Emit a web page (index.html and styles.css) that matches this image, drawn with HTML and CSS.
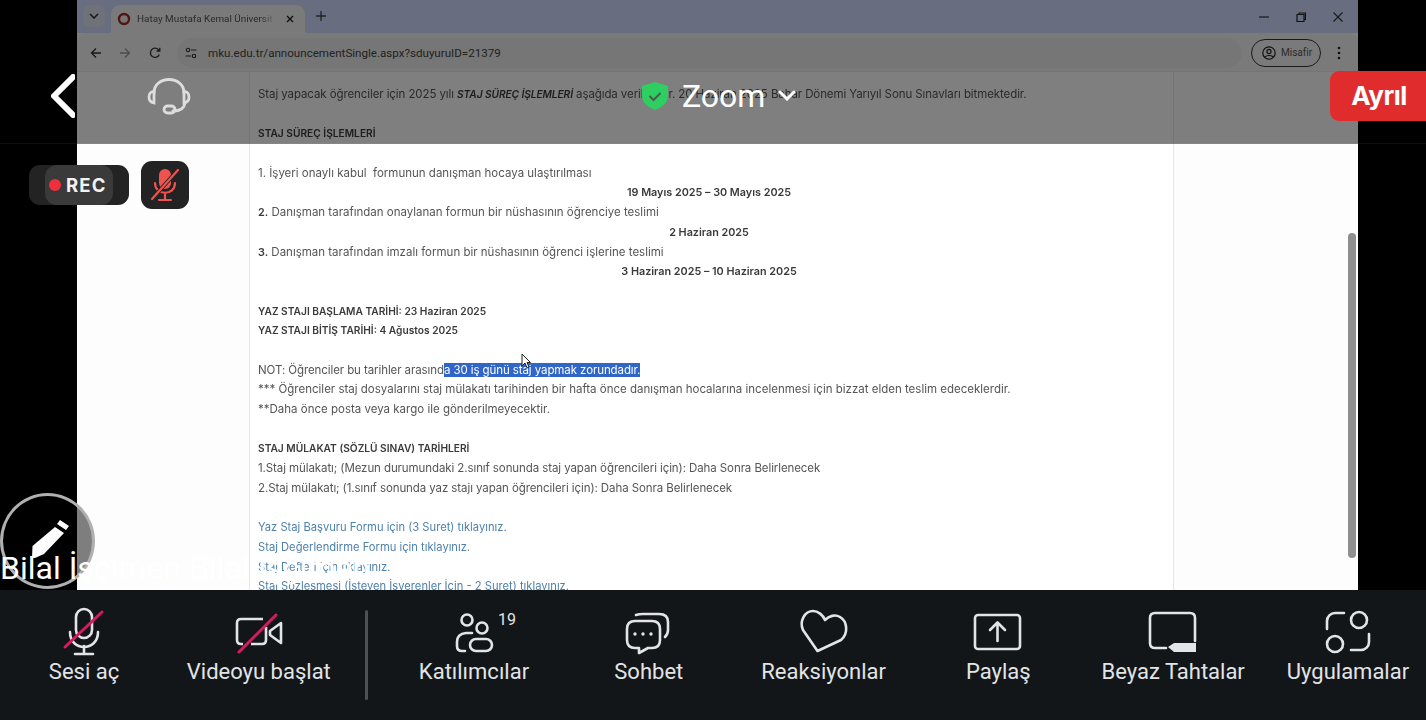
FILE: index.html
```html
<!DOCTYPE html>
<html lang="tr">
<head>
<meta charset="utf-8">
<title>Zoom</title>
<link rel="stylesheet" href="styles.css">
</head>
<body>
<div class="stage">
  <main class="share">
    <div class="screen">
      <div class="tabstrip">
        <span class="tabmenu"><svg width="10" height="6" viewBox="0 0 10 6"><path d="M1 1l4 4 4-4" fill="none" stroke="#333" stroke-width="1.6"/></svg></span>
        <div class="tab">
          <svg class="favicon" width="14" height="14" viewBox="0 0 14 14"><circle cx="7" cy="7" r="5" fill="#f3e9e4" stroke="#9c2f2c" stroke-width="2.4"/></svg>
          <span class="tabtitle">Hatay Mustafa Kemal Üniversit</span>
          <svg class="tabclose" width="8" height="8" viewBox="0 0 8 8"><path d="M1 1l6 6M7 1l-6 6" stroke="#222" stroke-width="1.4"/></svg>
        </div>
        <svg class="newtab" width="10" height="10" viewBox="0 0 10 10"><path d="M5 0v10M0 5h10" stroke="#444" stroke-width="1.3"/></svg>
        <div class="winctl">
          <svg width="10" height="10" viewBox="0 0 10 10"><path d="M0 5h10" stroke="#333" stroke-width="1.2"/></svg>
          <svg width="10" height="10" viewBox="0 0 10 10"><path d="M1 2.5h7v7H1zM3 2.5V1h6.5v6.500H8" fill="none" stroke="#222" stroke-width="1.2"/></svg>
          <svg width="10" height="10" viewBox="0 0 10 10"><path d="M.5.500l9 9M9.500.500l-9 9" stroke="#333" stroke-width="1.1"/></svg>
        </div>
      </div>
      <div class="navbar">
        <svg class="nav-back" width="12" height="12" viewBox="0 0 12 12"><path d="M11 6H1.500M6 1.500L1.500 6 6 10.500" fill="none" stroke="#333" stroke-width="1.300"/></svg>
        <svg class="nav-fwd" width="12" height="12" viewBox="0 0 12 12"><path d="M1 6h9.500M6 1.500L10.500 6 6 10.500" fill="none" stroke="#999" stroke-width="1.300"/></svg>
        <svg class="nav-reload" width="12" height="12" viewBox="0 0 12 12"><path d="M10.300 7.500A4.600 4.600 0 1 1 9.500 2.800L10.800 4M10.800 .8V4H7.600" fill="none" stroke="#333" stroke-width="1.300"/></svg>
        <div class="omnibox">
          <svg width="12" height="12" viewBox="0 0 12 12"><circle cx="3" cy="3" r="1.700" fill="none" stroke="#333" stroke-width="1.100"/><path d="M6 3h5.500M.5 9H6" stroke="#333" stroke-width="1.200"/><circle cx="9" cy="9" r="1.700" fill="none" stroke="#333" stroke-width="1.100"/></svg>
          <span class="url">mku.edu.tr/announcementSingle.aspx?sduyuruID=21379</span>
        </div>
        <div class="guest">
          <svg width="14" height="14" viewBox="0 0 14 14"><circle cx="7" cy="7" r="6.200" fill="none" stroke="#222" stroke-width="1.200"/><circle cx="7" cy="5.500" r="2.100" fill="none" stroke="#222" stroke-width="1.200"/><path d="M3 11c1-2 7-2 8 0" fill="none" stroke="#222" stroke-width="1.200"/></svg>
          <span>Misafir</span>
        </div>
        <svg class="kebab" width="4" height="14" viewBox="0 0 4 14"><circle cx="2" cy="2" r="1.300" fill="#222"/><circle cx="2" cy="7" r="1.300" fill="#222"/><circle cx="2" cy="12" r="1.300" fill="#222"/></svg>
      </div>
      <div class="page">
        <aside class="side"></aside>
        <article class="article">
          <p class="line tight">Staj yapacak öğrenciler için 2025 yılı <b class="caps"><i>STAJ SÜREÇ İŞLEMLERİ</i></b> aşağıda verilmiştir. 20 Haziran 2025 Bahar Dönemi Yarıyıl Sonu Sınavları bitmektedir.</p>
          <p class="line gap"></p>
          <p class="line"><b class="caps">STAJ SÜREÇ İŞLEMLERİ</b></p>
          <p class="line gap"></p>
          <p class="line">1. İşyeri onaylı kabul&nbsp; formunun danışman hocaya ulaştırılması</p>
          <p class="line center"><b>19 Mayıs 2025 – 30 Mayıs 2025</b></p>
          <p class="line"><b>2.</b> Danışman tarafından onaylanan formun bir nüshasının öğrenciye teslimi</p>
          <p class="line center"><b>2 Haziran 2025</b></p>
          <p class="line"><b>3.</b> Danışman tarafından imzalı formun bir nüshasının öğrenci işlerine teslimi</p>
          <p class="line center"><b>3 Haziran 2025 – 10 Haziran 2025</b></p>
          <p class="line gap"></p>
          <p class="line"><b class="caps">YAZ STAJI BAŞLAMA TARİHİ: 23 Haziran 2025</b></p>
          <p class="line"><b class="caps">YAZ STAJI BİTİŞ TARİHİ: 4 Ağustos 2025</b></p>
          <p class="line gap"></p>
          <p class="line tight">NOT: Öğrenciler bu tarihler arasınd<span class="selected">a 30 iş günü staj yapmak zorundadır.</span></p>
          <p class="line">*** Öğrenciler staj dosyalarını staj mülakatı tarihinden bir hafta önce danışman hocalarına incelenmesi için bizzat elden teslim edeceklerdir.</p>
          <p class="line">**Daha önce posta veya kargo ile gönderilmeyecektir.</p>
          <p class="line gap"></p>
          <p class="line"><b class="caps">STAJ MÜLAKAT (SÖZLÜ SINAV) TARİHLERİ</b></p>
          <p class="line tight">1.Staj mülakatı; (Mezun durumundaki 2.sınıf sonunda staj yapan öğrencileri için): Daha Sonra Belirlenecek</p>
          <p class="line tight">2.Staj mülakatı; (1.sınıf sonunda yaz stajı yapan öğrencileri için): Daha Sonra Belirlenecek</p>
          <p class="line gap"></p>
          <p class="line link">Yaz Staj Başvuru Formu için (3 Suret) tıklayınız.</p>
          <p class="line link">Staj Değerlendirme Formu için tıklayınız.</p>
          <p class="line link">Staj Defteri için tıklayınız.</p>
          <p class="line link">Staj Sözleşmesi (İsteyen İşverenler İçin - 2 Suret) tıklayınız.</p>
        </article>
        <aside class="side right"></aside>
        <div class="scrollthumb"></div>
      </div>
    </div>
  </main>

  <nav class="toolbar">
    <div class="tool">
      <svg class="ticon" width="48" height="48" viewBox="0 0 48 48" fill="none" stroke="#e2e4e6" stroke-width="2.600" stroke-linecap="round">
        <rect x="16" y="1" width="16" height="29" rx="8"/>
        <path d="M10 24c0 20 28 20 28 0M24 38v8M15 46h18"/>
        <path d="M5 39L42 4" stroke="#d81b5c" stroke-width="3"/>
      </svg>
      <span>Sesi aç</span>
    </div>
    <div class="tool">
      <svg class="ticon" width="48" height="48" viewBox="0 0 48 48" fill="none" stroke="#e2e4e6" stroke-width="2.600" stroke-linejoin="round">
        <path d="M28 11H6q-4 0-4 4v17q0 4 4 4h2M16 36h11q4 0 4-4V19"/>
        <path d="M46 15L35 23v4l11 8z"/>
        <path d="M4 44L41 7" stroke="#d81b5c" stroke-width="3" stroke-linecap="round"/>
      </svg>
      <span>Videoyu başlat</span>
    </div>
    <div class="divider"></div>
    <div class="tool">
      <svg class="ticon" width="48" height="48" viewBox="0 0 48 48" fill="none" stroke="#e2e4e6" stroke-width="2.600" stroke-linecap="round">
        <circle cx="17" cy="12" r="5.500"/>
        <circle cx="32" cy="20" r="5.500"/>
        <rect x="20" y="31" width="22" height="12" rx="6"/>
        <path d="M15 43h-3q-5 0-5-5v-4q0-8 9-9h6"/>
      </svg>
      <span>Katılımcılar</span>
      <span class="count">19</span>
    </div>
    <div class="tool">
      <svg class="ticon" width="48" height="48" viewBox="0 0 48 48" fill="none" stroke="#e2e4e6" stroke-width="2.600" stroke-linecap="round" stroke-linejoin="round">
        <path d="M11 7q3-1 7-1h16q9 0 9 8v8q0 4-3 7"/>
        <path d="M10 13h17q8 0 8 8v11q0 8-8 8h-4l-9 5v-5h-4q-8 0-8-8V21q0-8 8-8z"/>
        <circle cx="10" cy="26" r="1.700" fill="#e2e4e6" stroke="none"/>
        <circle cx="18" cy="26" r="1.700" fill="#e2e4e6" stroke="none"/>
        <circle cx="26" cy="26" r="1.700" fill="#e2e4e6" stroke="none"/>
      </svg>
      <span>Sohbet</span>
    </div>
    <div class="tool">
      <svg class="ticon" width="48" height="48" viewBox="0 0 48 48" fill="none" stroke="#e2e4e6" stroke-width="2.600" stroke-linejoin="round">
        <path d="M17.500 43L3 22C-1 13 5 3 13 3c5 0 10 4 12 9 4-4 10-6 15-3 7 4 9 16 1 23z"/>
      </svg>
      <span>Reaksiyonlar</span>
    </div>
    <div class="tool">
      <svg class="ticon" width="48" height="48" viewBox="0 0 48 48" fill="none" stroke="#e2e4e6" stroke-width="2.600" stroke-linecap="round" stroke-linejoin="round">
        <rect x="1" y="7" width="45" height="34" rx="3"/>
        <path d="M23.500 33V15M16 22l7.500-7.500L31 22"/>
      </svg>
      <span>Paylaş</span>
    </div>
    <div class="tool">
      <svg class="ticon" width="48" height="48" viewBox="0 0 48 48" fill="none" stroke="#e2e4e6" stroke-width="2.600" stroke-linecap="round">
        <path d="M17 40H6q-5 0-5-5V10q0-5 5-5h35q5 0 5 5v23"/>
        <path d="M19 39l6-4h22v9H25z" fill="#e2e4e6" stroke="none"/>
      </svg>
      <span>Beyaz Tahtalar</span>
    </div>
    <div class="tool">
      <svg class="ticon" width="48" height="48" viewBox="0 0 48 48" fill="none" stroke="#e2e4e6" stroke-width="2.600" stroke-linecap="round">
        <circle cx="35" cy="12" r="8"/>
        <circle cx="11" cy="36" r="8"/>
        <path d="M3 21v-8a8 8 0 0 1 8-8h9M45 26v8a8 8 0 0 1-8 8H27"/>
      </svg>
      <span>Uygulamalar</span>
    </div>
  </nav>

  <header class="topbar">
    <svg class="back" width="24" height="44" viewBox="0 0 24 44"><path d="M22 3L3 22l19 19" fill="none" stroke="#fff" stroke-width="6" stroke-linecap="round" stroke-linejoin="round"/></svg>
    <svg class="headset" width="44" height="38" viewBox="0 0 44 38" fill="none" stroke="#ddd" stroke-width="2.800" stroke-linecap="round">
      <path d="M7 16C7 -2 37 -2 37 16"/>
      <path d="M7 14q-5 1-5 6t5 6zM37 14q5 1 5 6t-5 6z"/>
      <path d="M38 26q-1 8-12 8"/>
      <rect x="17" y="29" width="11" height="7" rx="3.500"/>
    </svg>
    <svg class="shield" width="26" height="28" viewBox="0 0 26 28"><path d="M13 0l13 4v10c0 7-6 11-13 14C6 25 0 21 0 14V4z" fill="#2ecf60"/><path d="M7.500 14l4 4 7-7" fill="none" stroke="#4a5a50" stroke-width="2"/></svg>
    <span class="meeting">Zoom</span>
    <svg class="caret" width="18" height="11" viewBox="0 0 18 11"><path d="M2 2l7 7 7-7" fill="none" stroke="#fff" stroke-width="3" stroke-linecap="round"/></svg>
    <button class="leave" type="button">Ayrıl</button>
  </header>

  <div class="status">
    <div class="rec"><span class="rec-inner"><i class="dot"></i>REC</span></div>
    <div class="mutebtn">
      <svg width="32" height="34" viewBox="0 0 32 34" fill="none" stroke="#ef5350" stroke-width="2.200" stroke-linecap="round">
        <rect x="10" y="1" width="12" height="20" rx="6" fill="#ef5350" stroke="none"/>
        <path d="M6 15c0 13 20 13 20 0M16 26v6M10 32h12"/>
        <path d="M4 30L28 3" stroke="#232323" stroke-width="4"/>
        <path d="M3 31L29 2"/>
      </svg>
    </div>
  </div>

  <div class="annotate">
    <svg width="40" height="40" viewBox="0 0 40 40"><path d="M30 1l9 6-3 4-9-6zM25 8l9 6L14 35l-9 4H2l.500-12z" fill="#fff"/></svg>
  </div>
  <div class="speaker">Bilal İşçimen Bilal İşçimen</div>
  <svg class="cursor" width="10" height="16" viewBox="0 0 10 16"><path d="M1 1v12l3-3 2 5 2-1-2-4.500h3.500z" fill="#fff" stroke="#222" stroke-width="1"/></svg>
</div>
</body>
</html>
```

FILE: styles.css
```css
* { box-sizing: border-box; }
html, body { margin: 0; padding: 0; background: #000; }
body { width: 1426px; height: 720px; overflow: hidden; font-family: Roboto, "Liberation Sans", sans-serif; }

.stage { position: relative; width: 1426px; height: 720px; display: flex; flex-direction: column; background: #000; overflow: hidden; }

/* Shared screen */
.share { height: 590px; padding: 0 68px 0 77px; overflow: hidden; flex: none; }
.screen { height: 590px; display: flex; flex-direction: column; background: #fff; }

.tabstrip { height: 33px; flex: none; display: flex; align-items: flex-end; background: #d0dcff; padding-left: 6px; }
.tabmenu { width: 22px; height: 22px; margin-bottom: 6px; border-radius: 7px; background: #dfe4f2; display: flex; align-items: center; justify-content: center; }
.tab { width: 194px; height: 28px; margin-left: 6px; background: #f4f4f4; border-radius: 9px 9px 0 0; display: flex; align-items: center; padding: 0 11px 0 6px; }
.favicon { flex: none; margin-right: 6px; }
.tabtitle { flex: 1; font: 9.900px/14px Roboto, sans-serif; color: #555; white-space: nowrap; overflow: hidden; -webkit-mask-image: linear-gradient(90deg, #000 90%, transparent); mask-image: linear-gradient(90deg, #000 90%, transparent); }
.tabclose { flex: none; margin-left: 11px; }
.newtab { margin: 0 0 12px 11px; }
.winctl { margin-left: auto; align-self: center; display: flex; gap: 27px; padding-right: 15px; }

.navbar { height: 39px; flex: none; display: flex; align-items: center; background: #f5f5f5; border-bottom: 1px solid #e8e8e8; padding: 1px 0 0 13px; border-radius: 8px 8px 0 0; }
.nav-fwd { margin-left: 17px; }
.nav-reload { margin-left: 18px; }
.omnibox { width: 1065px; height: 30px; margin-left: 16px; border-radius: 15px; background: #ececec; display: flex; align-items: center; padding-left: 8px; }
.url { margin-left: 11px; font: 11.600px/16px Roboto, sans-serif; color: #444; }
.guest { width: 70px; height: 28px; margin-left: 9px; border: 1px solid #333; border-radius: 14px; display: flex; align-items: center; gap: 5px; padding-left: 10px; font: 10px/14px Roboto, sans-serif; color: #555; }
.kebab { margin-left: 16px; }

.page { position: relative; flex: 1; display: flex; min-height: 0; overflow: hidden; }
.side { width: 173px; flex: none; background: #fdfdfd; border-right: 1px solid #e6e6e6; }
.side.right { flex: 1; border-right: 0; border-left: 1px solid #e6e6e6; background: #fdfdfe; }
.article { width: 923px; flex: none; padding: 13px 13px 0 8px; background: #fff; font: 11.500px/19.700px Inter, "Open Sans", sans-serif; color: #555; filter: blur(.25px); }
.line { margin: 0; height: 19.700px; white-space: nowrap; }
.line b { font-size: 10.800px; font-weight: 600; color: #3a3a3a; }
.line b.caps { font-size: 10.200px; }
.tight { letter-spacing: -.09px; }
.center { text-align: center; }
.link { color: #4f81ad; font-size: 11.200px; }
.selected { background: #2f66c8; color: #fff; }
.scrollthumb { position: absolute; right: 2px; top: 161px; width: 8px; height: 325px; border-radius: 4px; background: #8f8f8f; }

/* Bottom toolbar */
.toolbar { height: 130px; flex: none; background: #131619; display: flex; align-items: flex-start; gap: 18.800px; padding: 18px 0 0 6px; }
.tool { position: relative; width: 156px; flex: none; display: flex; flex-direction: column; align-items: center; color: #e2e4e6; font-size: 22px; line-height: 30px; white-space: nowrap; }
.ticon { display: block; overflow: visible; margin-bottom: 1px; }
.count { position: absolute; left: 102px; top: 2px; font-size: 16px; line-height: 20px; }
.divider { width: 3px; height: 90px; margin: 2px 9.300px 0; border-radius: 2px; background: #4d5054; flex: none; }

/* Overlays */
.topbar { position: absolute; left: 0; top: 0; width: 1426px; height: 144px; padding: 71px 0 23px 51px; background: rgba(0,0,0,.5); display: flex; align-items: center; border-bottom: 1px solid rgba(255,255,255,.06); }
.back { flex: none; }
.headset { flex: none; margin-left: 72px; }
.shield { flex: none; margin-left: 451px; }
.meeting { margin-left: 14px; font: 32px/44px Roboto, sans-serif; color: #fff; }
.caret { margin-left: 13px; }
.leave { margin-left: auto; width: 96px; height: 50px; border: 0; padding: 0 0 0 2px; border-radius: 9px 0 0 9px; background: #e02c2c; color: #fff; font: 700 26px/50px Inter, Roboto, sans-serif; letter-spacing: -.5px; }

.status { position: absolute; left: 29px; top: 161px; display: flex; align-items: center; gap: 12px; }
.rec { width: 100px; height: 40px; border-radius: 11px; background: #232323; display: flex; padding-left: 16px; }
.rec-inner { width: 68px; height: 40px; border-radius: 12px; background: #3a3a3a; display: flex; align-items: center; padding-left: 4px; color: #f2f2f2; font: 700 18.500px/40px Inter, Roboto, sans-serif; letter-spacing: 1.200px; white-space: nowrap; }
.dot { width: 12px; height: 12px; border-radius: 50%; background: #ef2f3c; margin-right: 5px; flex: none; }
.mutebtn { width: 48px; height: 48px; border-radius: 11px; background: #232323; display: flex; align-items: center; justify-content: center; }

.annotate { position: absolute; left: 0; top: 493px; width: 95px; height: 96px; border-radius: 50%; border: 3px solid #b0b0b0; background: rgba(0,0,0,.5); display: flex; align-items: center; justify-content: center; padding: 0 0 4px 4px; }
.speaker { position: absolute; left: 0; top: 548px; font: 32px/40px Roboto, sans-serif; color: #fff; white-space: nowrap; }
.cursor { position: absolute; left: 521px; top: 353px; }
```
